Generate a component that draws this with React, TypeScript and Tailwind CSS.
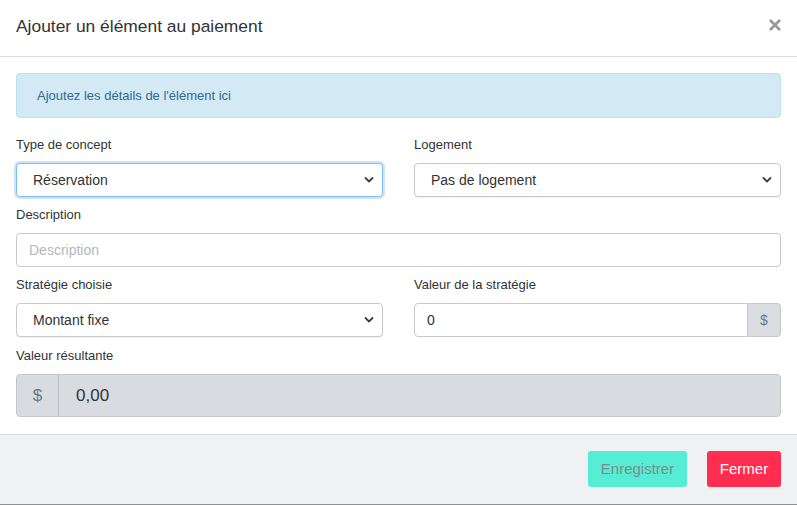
import React from "react";

const Chevron = () => (
  <svg width="10" height="7" viewBox="0 0 10 7" className="pointer-events-none absolute right-[9px] top-1/2 -translate-y-1/2">
    <path d="M1.5 1.5 L5 5 L8.5 1.5" fill="none" stroke="#3a3f44" strokeWidth="1.8" strokeLinecap="round" strokeLinejoin="round" />
  </svg>
);

function Select({ value, focused }: { value: string; focused?: boolean }) {
  return (
    <div className="relative">
      <select
        defaultValue={value}
        className={
          "w-full h-[34px] appearance-none rounded-[4px] bg-white pl-[16px] pr-8 text-[14px] text-[#333] outline-none " +
          (focused
            ? "border border-[#7cbdf5] shadow-[0_0_0_2px_rgba(140,196,245,0.45)]"
            : "border border-[#c6cacf] shadow-[0_1px_1px_rgba(0,0,0,0.06)]")
        }
      >
        <option>{value}</option>
      </select>
      <Chevron />
    </div>
  );
}

function Label({ children }: { children: React.ReactNode }) {
  return <div className="h-[20px] leading-[20px] pt-[1px] mb-[9px] text-[13px] text-[#333]">{children}</div>;
}

export default function App() {
  return (
    <div className="w-[797px] h-[505px] bg-white overflow-hidden flex flex-col" style={{ fontFamily: '"Liberation Sans", Arial, sans-serif' }}>
      <div className="h-[57px] shrink-0 border-b border-[#dcdcdc] flex items-center justify-between pl-4 pr-[16px]">
        <div className="text-[17.4px] text-[#333] leading-none -mt-[3px]">Ajouter un élément au paiement</div>
        <svg width="12" height="12" viewBox="0 0 12 12" className="-mt-[6px]">
          <path d="M2 2 L10 10 M10 2 L2 10" stroke="#9a9a9a" strokeWidth="2.8" strokeLinecap="square" />
        </svg>
      </div>
      <div className="px-4 pt-4 flex-1">
        <div className="h-[45px] rounded-[4px] border border-[#b8e2ee] bg-[#d3e9f4] flex items-center pl-[20px] text-[13px] text-[#2f6b8d] mb-[16px]">
          Ajoutez les détails de l'élément ici
        </div>
        <div className="grid grid-cols-2 gap-x-[31px] mb-[7px]">
          <div>
            <Label>Type de concept</Label>
            <Select value="Réservation" focused />
          </div>
          <div>
            <Label>Logement</Label>
            <Select value="Pas de logement" />
          </div>
        </div>
        <div className="mb-[7px]">
          <Label>Description</Label>
          <input
            placeholder="Description"
            className="w-full h-[34px] rounded-[4px] border border-[#c6cacf] bg-white pl-[12px] text-[14px] text-[#333] placeholder:text-[#b3b8be] outline-none"
          />
        </div>
        <div className="grid grid-cols-2 gap-x-[31px] mb-[8px]">
          <div>
            <Label>Stratégie choisie</Label>
            <Select value="Montant fixe" />
          </div>
          <div>
            <Label>Valeur de la stratégie</Label>
            <div className="flex h-[34px]">
              <input
                defaultValue="0"
                className="flex-1 min-w-0 rounded-l-[4px] border border-[#c6cacf] bg-white pl-[12px] text-[14px] text-[#333] outline-none"
              />
              <div className="w-[33px] rounded-r-[4px] border border-l-0 border-[#c6cacf] bg-[#d9dde1] flex items-center justify-center text-[14px] text-[#6b7784]">
                $
              </div>
            </div>
          </div>
        </div>
        <div>
          <Label>Valeur résultante</Label>
          <div className="flex h-[43px] rounded-[4px] border border-[#c3c8cd] bg-[#d8dce0] overflow-hidden">
            <div className="w-[42px] border-r border-[#b9bec3] flex items-center justify-center text-[17px] text-[#6b7784]">$</div>
            <div className="flex-1 flex items-center pl-[17px] text-[17px] text-[#333]">0,00</div>
          </div>
        </div>
      </div>
      <div className="h-[71px] shrink-0 border-t border-[#d7dce0] border-b border-b-[#8f9294] bg-[#f0f1f3] flex items-start justify-end gap-[20px] pt-[16px] pr-[16px]">
        <button className="h-[36px] w-[99px] rounded-[3px] bg-[#55edd3] text-[15px] text-[#7d8b8d]">Enregistrer</button>
        <button className="h-[36px] w-[74px] rounded-[3px] bg-[#ff2d4f] text-[15px] text-white">Fermer</button>
      </div>
    </div>
  );
}
